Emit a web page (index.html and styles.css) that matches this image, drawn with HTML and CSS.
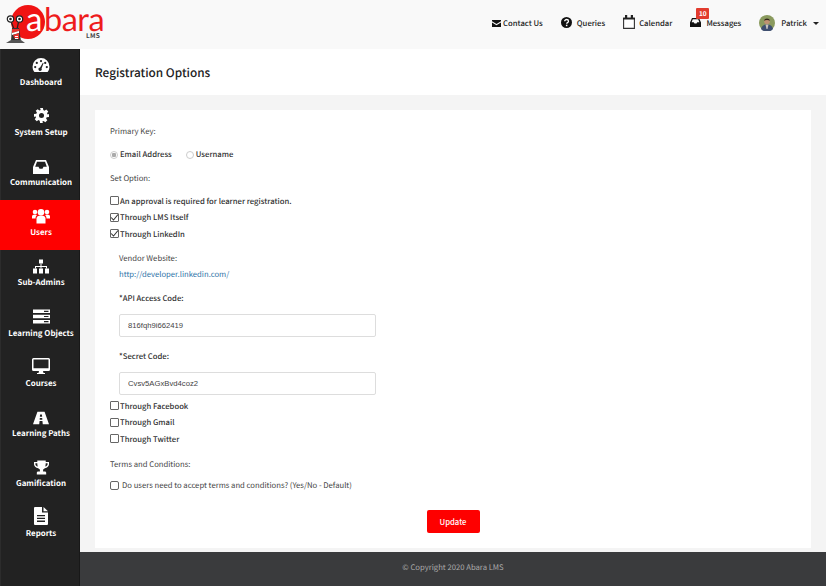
FILE: index.html
```html
<!DOCTYPE html>
<html lang="en">
<head>
<meta charset="utf-8">
<title>Registration Options</title>
<link rel="stylesheet" href="styles.css">
</head>
<body>
<header class="topbar">
  <div class="logo">
    <svg class="logo-mark" viewBox="0 0 46 44" width="46" height="44">
      <circle cx="28" cy="22" r="17" fill="#f01414"/>
      <path d="M10.500 20 L14 29 M19 20 L17 29" stroke="#222" stroke-width="1.200" fill="none"/>
      <circle cx="10.500" cy="19" r="3.200" fill="#fff" stroke="#222" stroke-width="1.200"/>
      <circle cx="10.500" cy="19" r="1.300" fill="#222"/>
      <circle cx="19.500" cy="19" r="3.200" fill="#fff" stroke="#222" stroke-width="1.200"/>
      <circle cx="19.500" cy="19" r="1.300" fill="#222"/>
      <path d="M12 28 h7 l2 13 h-10 z" fill="#333"/>
      <path d="M12 29 h7 v2 l-7 2 z" fill="#e8322e"/>
      <path d="M12 33 l7 -2 v2 l-7 2 z" fill="#fff"/>
      <path d="M13 35 l6 -2 v6 h-4 z" fill="#e8322e"/>
      <path d="M15 36 h3 v1 h-3 z M15 38 h3 v1 h-3 z" fill="#fff"/>
      <path d="M6 43 l5 -3 h10 l4 3 z" fill="#555"/>
    </svg>
    <span class="logo-a">a</span><span class="logo-word">bara</span>
    <span class="logo-lms">LMS</span>
  </div>
  <nav class="topnav">
    <a class="topitem contact"><svg class="ti" width="9" height="7" viewBox="0 0 9 7"><path d="M0 0h9v1.300L4.500 4 0 1.300zM0 2.500l4.500 2.700L9 2.500V7H0z" fill="#111"/></svg>Contact Us</a>
    <a class="topitem query"><svg class="ti" width="11" height="11" viewBox="0 0 11 11"><circle cx="5.500" cy="5.500" r="5.500" fill="#111"/><path d="M3.700 4.200c0-2.300 3.800-2.300 3.800 0 0 1.500-1.800 1.300-1.800 2.600" stroke="#fff" stroke-width="1.300" fill="none"/><rect x="4.900" y="7.700" width="1.500" height="1.500" fill="#fff"/></svg>Queries</a>
    <a class="topitem cal"><svg class="ti" width="12" height="14" viewBox="0 0 12 14"><path d="M.6 3h10.800v10.400H.6z" fill="#fff" stroke="#333" stroke-width="1.100"/><path d="M0 3h12v1.500H0z" fill="#222"/><rect x="2" y="0" width="2.200" height="3.500" fill="#222"/><rect x="7.800" y="0" width="2.200" height="3.500" fill="#222"/></svg>Calendar</a>
    <a class="topitem msg"><span class="badge">10</span><svg class="ti" width="11" height="9" viewBox="0 0 11 9"><path d="M2 0h7l2 4.500V9H0V4.500zM2.800 1.200 1.600 4.300h2.200l.7 1.200h2l.7-1.200h2.200L8.200 1.200z" fill="#111" fill-rule="evenodd"/></svg>Messages</a>
    <a class="topitem user">
      <svg class="avatar" width="16" height="16" viewBox="0 0 16 16"><circle cx="8" cy="8" r="8" fill="#8a9a5e"/><path d="M2 14c1-3.500 3-4.500 6-4.500s5 1 6 4.500a8 8 0 0 1-12 0z" fill="#3f4f70"/><path d="M6.500 9.500h3L8.500 14h-1z" fill="#c9c3bd"/><circle cx="8" cy="6.500" r="2.800" fill="#c09272"/><path d="M5 5.800c.7-3 5.300-3 6 0-1.500-1-4.500-1-6 0z" fill="#33261c"/></svg>
      Patrick<span class="caret"></span>
    </a>
  </nav>
</header>
<div class="shell">
  <aside class="sidebar">
    <a class="side"><svg class="si" viewBox="0 0 18 16" width="18" height="15"><path fill-rule="evenodd" d="M9 0a9 9 0 0 1 9 9c0 2.500-.8 4.700-2 6H2C.8 13.700 0 11.500 0 9a9 9 0 0 1 9-9zM9 2a1.200 1.200 0 1 0 0 2.400A1.200 1.200 0 0 0 9 2zM4.500 4a1.200 1.200 0 1 0 0 2.400 1.200 1.200 0 0 0 0-2.400zM13.500 4a1.200 1.200 0 1 0 0 2.400 1.200 1.200 0 0 0 0-2.400zM2.800 8.500a1.200 1.200 0 1 0 0 2.400 1.200 1.200 0 0 0 0-2.400zM15.200 8.500a1.200 1.200 0 1 0 0 2.400 1.200 1.200 0 0 0 0-2.400zM11 5 8 10.200a1.800 1.800 0 1 0 1.600.9L11.800 5.400z" fill="#fff"/></svg><span>Dashboard</span></a>
    <a class="side"><svg class="si" viewBox="0 0 16 16" width="15" height="15"><path fill-rule="evenodd" d="M6.500 0h3l.4 2.200 1.300.6L13.100 1.500l2.100 2.100-1.300 1.900.6 1.300L16 6.500v3l-2.500.4-.6 1.300 1.300 1.900-2.100 2.100-1.900-1.300-1.300.6L9.500 16h-3l-.4-2.500-1.300-.6-1.900 1.300L.8 12.100l1.300-1.900-.6-1.300L0 9.500v-3l2.500-.4.600-1.300-1.300-1.900L3.900 1.300l1.900 1.300 1.300-.6zM8 5.300a2.700 2.700 0 1 0 0 5.400 2.700 2.700 0 0 0 0-5.400z" fill="#fff"/></svg><span>System Setup</span></a>
    <a class="side"><svg class="si" viewBox="0 0 16 14" width="16" height="14"><path fill-rule="evenodd" d="M3 0h10l3 7v7H0V7zM4 1.800 2.200 6.800h3.300l1 2h3l1-2h3.300L12 1.800z" fill="#fff"/></svg><span>Communication</span></a>
    <a class="side active"><svg class="si" viewBox="0 0 18 15" width="18" height="16"><g fill="#fff"><circle cx="9" cy="3.800" r="3.300"/><circle cx="3" cy="3.500" r="2.300"/><circle cx="15" cy="3.500" r="2.300"/><path d="M4.500 15V10c0-2 1.500-3 4.500-3s4.500 1 4.500 3v5z"/><path d="M0 10V8c0-1.300 1-2 3-2 .8 0 1.500.2 2 .5C4 7.300 3.500 8.500 3.500 10zM18 10V8c0-1.300-1-2-3-2-.8 0-1.500.2-2 .5 1 .8 1.500 2 1.500 3.500z"/></g></svg><span>Users</span></a>
    <a class="side"><svg class="si" viewBox="0 0 16 14" width="16" height="15"><g fill="#fff"><rect x="6" y="0" width="4" height="4"/><rect x="0" y="9" width="4" height="5"/><rect x="6" y="9" width="4" height="5"/><rect x="12" y="9" width="4" height="5"/><path d="M7.500 4h1v2.500h5.500V9h-1V7.500H8.500V9h-1V7.500H3V9H2V6.500h5.500z"/></g></svg><span>Sub-Admins</span></a>
    <a class="side"><svg class="si" viewBox="0 0 17 14" width="17" height="15"><g fill="#fff"><path fill-rule="evenodd" d="M0 0h17v3.600H0zM11 1.200v1.200h4.500V1.200zM0 5.200h17v3.600H0zM11 6.400v1.200h4.500V6.400zM0 10.400h17V14H0zM11 11.600v1.200h4.500v-1.200z"/></g></svg><span>Learning Objects</span></a>
    <a class="side"><svg class="si" viewBox="0 0 18 16" width="18" height="16"><path fill-rule="evenodd" d="M1.500 0h15A1.500 1.500 0 0 1 18 1.500v10a1.500 1.500 0 0 1-1.500 1.500H11l.5 2H13v1H5v-1h1.500l.5-2H1.500A1.500 1.500 0 0 1 0 11.500v-10A1.500 1.500 0 0 1 1.500 0zM1.500 1.500v8.800h15V1.500z" fill="#fff"/></svg><span>Courses</span></a>
    <a class="side"><svg class="si" viewBox="0 0 18 14" width="16" height="14"><path fill-rule="evenodd" d="M5 0h8l5 14h-7l-.4-3.500H7.400L7 14H0zM8 3l-.3 2.500h2.600L10 3zM7.600 7l-.1 2h3l-.1-2z" fill="#fff"/></svg><span>Learning Paths</span></a>
    <a class="side"><svg class="si" viewBox="0 0 16 15" width="15" height="15"><path fill-rule="evenodd" d="M3.500 0h9v1.500H16V4c0 2-1.800 3.800-4.500 4.200-.6.700-1.200 1.200-1.800 1.500v2h1.800c1 0 1.500.7 1.500 1.500v1.800H3v-1.800c0-.8.500-1.500 1.500-1.500h1.800v-2c-.6-.3-1.200-.8-1.800-1.500C1.800 7.800 0 6 0 4V1.500h3.500zM1.500 3v1c0 1 .9 2 2.500 2.500C3.700 5.500 3.500 4.300 3.500 3zM14.500 3h-2c0 1.300-.2 2.500-.5 3.500 1.600-.5 2.500-1.500 2.500-2.500z" fill="#fff"/></svg><span>Gamification</span></a>
    <a class="side"><svg class="si" viewBox="0 0 14 18" width="14" height="18"><path fill-rule="evenodd" d="M1 0h7v5.500h6V17a1 1 0 0 1-1 1H1a1 1 0 0 1-1-1V1a1 1 0 0 1 1-1zM9.500 0 14 4.200H9.500zM3 8v1.300h8V8zM3 10.800v1.300h8v-1.300zM3 13.600v1.300h8v-1.300z" fill="#fff"/></svg><span>Reports</span></a>
  </aside>
  <div class="main">
    <h1 class="title">Registration Options</h1>
    <div class="content">
      <form class="card">
        <p class="lbl">Primary Key:</p>
        <div class="radios">
          <label class="radio"><span class="dot on"></span>Email Address</label>
          <label class="radio"><span class="dot"></span>Username</label>
        </div>
        <p class="lbl set">Set Option:</p>
        <div class="checks first">
          <label class="chk"><span class="box"></span>An approval is required for learner registration.</label>
          <label class="chk"><span class="box tick"><svg viewBox="0 0 9 9" width="9" height="9"><path d="M1.200 4.500l2.300 2.500L8 1.500" fill="none" stroke="#333" stroke-width="1.100"/></svg></span>Through LMS Itself</label>
          <label class="chk"><span class="box tick"><svg viewBox="0 0 9 9" width="9" height="9"><path d="M1.200 4.500l2.300 2.500L8 1.500" fill="none" stroke="#333" stroke-width="1.100"/></svg></span>Through LinkedIn</label>
        </div>
        <div class="vendor">
          <p class="lbl">Vendor Website:</p>
          <a class="link">http://developer.linkedin.com/</a>
          <p class="req">*API Access Code:</p>
          <input class="field" type="text" value="816fqh9i662419">
          <p class="req second">*Secret Code:</p>
          <input class="field" type="text" value="Cvsv5AGxBvd4coz2">
        </div>
        <div class="checks">
          <label class="chk"><span class="box"></span>Through Facebook</label>
          <label class="chk"><span class="box"></span>Through Gmail</label>
          <label class="chk"><span class="box"></span>Through Twitter</label>
        </div>
        <p class="lbl terms">Terms and Conditions:</p>
        <label class="term"><span class="box big"></span>Do users need to accept terms and conditions? (Yes/No - Default)</label>
        <div class="actions"><button class="btn" type="button">Update</button></div>
      </form>
    </div>
    <footer class="foot">© Copyright 2020 Abara LMS</footer>
  </div>
</div>
</body>
</html>
```
FILE: styles.css
```css
* { box-sizing: border-box; }
html, body { margin: 0; height: 586px; overflow: hidden; }
body { font-family: "Noto Sans CJK SC", "Noto Sans", sans-serif; font-size: 7.700px; color: #333; background: #fff; text-rendering: geometricPrecision; }
p { margin: 0; }

.topbar { height: 49px; background: #f9f9f9; display: flex; justify-content: space-between; }
.logo { position: relative; width: 110px; height: 49px; }
.logo-mark { position: absolute; left: 0; top: 0; }
.logo-a { position: absolute; left: 26px; top: 1px; font: 400 33px/36px Lato, sans-serif; color: #fff; }
.logo-word { position: absolute; left: 44px; top: 1px; font: 400 32.500px/36px Lato, sans-serif; color: #ee1c1c; letter-spacing: -.5px; }
.logo-lms { position: absolute; left: 86px; top: 31px; font: 700 6.500px/8px "Noto Sans CJK SC", sans-serif; color: #444; letter-spacing: .2px; }

.topnav { display: flex; align-items: center; height: 46px; }
.topitem { position: relative; display: flex; align-items: center; color: #222; font-weight: 500; font-size: 7.700px; margin-right: 18px; white-space: nowrap; }
.ti { margin-right: 5px; flex: none; }
.contact .ti { margin-right: 2px; }
.query .ti { margin-top: -1px; }
.cal .ti { margin-right: 4px; margin-top: -2px; }
.msg .ti { margin-top: -1px; }
.badge { position: absolute; left: 6px; top: -10px; width: 13px; height: 11px; background: #e23c2e; color: #fff; font-size: 6.500px; font-weight: 700; line-height: 11px; text-align: center; border-radius: 1px; }
.user { margin-right: 7px; }
.avatar { margin-right: 6px; }
.caret { display: inline-block; margin-left: 6px; border: 3px solid transparent; border-top: 3.500px solid #222; border-bottom: 0; }

.shell { display: flex; height: 537px; }
.sidebar { width: 80px; flex: none; background: #222; box-shadow: inset 1px 0 0 #2c2c2c, inset -1px 0 0 #181818; }
.side { height: 50.200px; display: flex; flex-direction: column; align-items: center; justify-content: flex-end; padding: 0 0 10.500px 2px; color: #fff; font-weight: 700; font-size: 7.900px; line-height: 12px; white-space: nowrap; }
.si { display: block; margin-bottom: 3.500px; flex: none; }
.active { background: #fe0000; }

.main { flex: 1; display: flex; flex-direction: column; min-width: 0; background: #f4f4f4; }
.title { margin: 0; height: 46px; background: #fff; padding-left: 15px; font-size: 11.800px; font-weight: 500; line-height: 47px; color: #222; }
.content { height: 457px; padding: 15px 15px 0; }
.card { background: #fff; height: 438px; padding: 16px 15px 0; }
.lbl { line-height: 12px; color: #444; }
.radios { display: flex; gap: 14px; margin-top: 11px; }
.radio { display: flex; align-items: center; line-height: 12px; color: #333; font-weight: 500; }
.dot { width: 8px; height: 8px; border-radius: 50%; border: 1px solid #ccc; margin: -1px 2px 0 0; background: #fff; }
.dot.on { background: radial-gradient(circle, #aaa 0 2px, #fff 2.500px); }
.set { margin-top: 12px; }
.checks { display: flex; flex-direction: column; gap: 4.500px; }
.checks.first { margin-top: 10px; }
.chk { display: flex; align-items: center; height: 12px; font-weight: 500; color: #333; }
.box { width: 9px; height: 9px; border: 1px solid #666; border-radius: 1px; margin: -1px 1px 0 0; display: flex; align-items: center; justify-content: center; flex: none; }
.box svg { flex: none; margin: -1px; }
.vendor { padding-left: 9px; margin-top: 13px; }
.link { display: block; color: #2f74a8; line-height: 12px; margin-top: 4px; }
.req { font-weight: 500; line-height: 12px; color: #333; margin-top: 12px; }
.req.second { margin-top: 14px; }
.field { display: block; width: 257px; height: 23px; margin-top: 9px; border: 1px solid #ddd; border-radius: 2px; padding: 0 8px; font-family: "Liberation Sans", sans-serif; font-size: 7.700px; color: #444; background: #fff; outline: none; }
.vendor + .checks { margin-top: 5px; }
.terms { margin-top: 14px; }
.term { display: flex; align-items: center; margin-top: 9px; line-height: 12px; color: #444; }
.box.big { width: 9px; height: 9px; margin-right: 3px; border-radius: 2px; }
.actions { display: flex; justify-content: center; margin-top: 18px; }
.btn { width: 53px; height: 23px; border: 0; border-radius: 2px; background: #fe0000; color: #fff; font-family: inherit; font-size: 7.700px; font-weight: 500; padding: 0; }
.foot { height: 34px; background: #3a3b3d; color: #aaa; text-align: center; font-size: 7.700px; line-height: 32px; }
```
